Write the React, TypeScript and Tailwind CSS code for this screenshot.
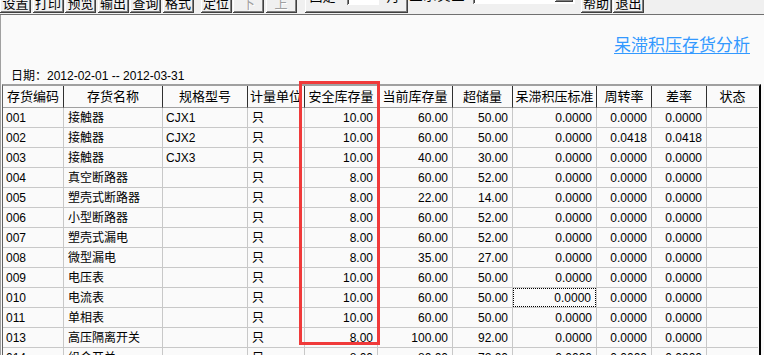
const FONT = "font-['Liberation_Sans','Noto_Sans_CJK_SC',sans-serif]";

const raised =
  "shadow-[inset_-1px_-1px_#404040,inset_1px_1px_#ffffff,inset_-2px_-2px_#808080]";
const sunken =
  "shadow-[inset_1px_1px_#808080,inset_-1px_-1px_#ffffff,inset_2px_2px_#404040]";

const headers = [
  "存货编码",
  "存货名称",
  "规格型号",
  "计量单位",
  "安全库存量",
  "当前库存量",
  "超储量",
  "呆滞积压标准",
  "周转率",
  "差率",
  "状态",
];

type Row = [string, string, string, string, string, string, string, string, string, string];

const rows: Row[] = [
  ["001", "接触器", "CJX1", "只", "10.00", "60.00", "50.00", "0.0000", "0.0000", "0.0000"],
  ["002", "接触器", "CJX2", "只", "10.00", "60.00", "50.00", "0.0000", "0.0418", "0.0418"],
  ["003", "接触器", "CJX3", "只", "10.00", "40.00", "30.00", "0.0000", "0.0000", "0.0000"],
  ["004", "真空断路器", "", "只", "8.00", "60.00", "52.00", "0.0000", "0.0000", "0.0000"],
  ["005", "塑壳式断路器", "", "只", "8.00", "22.00", "14.00", "0.0000", "0.0000", "0.0000"],
  ["006", "小型断路器", "", "只", "8.00", "60.00", "52.00", "0.0000", "0.0000", "0.0000"],
  ["007", "塑壳式漏电", "", "只", "8.00", "60.00", "52.00", "0.0000", "0.0000", "0.0000"],
  ["008", "微型漏电", "", "只", "8.00", "35.00", "27.00", "0.0000", "0.0000", "0.0000"],
  ["009", "电压表", "", "只", "10.00", "60.00", "50.00", "0.0000", "0.0000", "0.0000"],
  ["010", "电流表", "", "只", "10.00", "60.00", "50.00", "0.0000", "0.0000", "0.0000"],
  ["011", "单相表", "", "只", "10.00", "60.00", "50.00", "0.0000", "0.0000", "0.0000"],
  ["013", "高压隔离开关", "", "只", "8.00", "100.00", "92.00", "0.0000", "0.0000", "0.0000"],
  ["014", "组合开关", "", "只", "8.00", "80.00", "72.00", "0.0000", "0.0000", "0.0000"],
];

function ToolButton({ label, disabled }: { label: string; disabled?: boolean }) {
  return (
    <div
      className={`flex h-[20px] w-[31px] shrink-0 items-center justify-center bg-[#f0f0f0] text-[13px] leading-none ${raised} ${
        disabled ? "text-[#a0a0a0] [text-shadow:1px_1px_#ffffff]" : "text-black"
      }`}
    >
      {label}
    </div>
  );
}

function Toolbar() {
  return (
    <div className="flex h-[15px] items-end overflow-hidden border-b border-[#707070] bg-[#f0f0f0] pb-px">
      <div className="flex items-end gap-[1.5px]">
        <ToolButton label="设置" />
        <ToolButton label="打印" />
        <ToolButton label="预览" />
        <ToolButton label="输出" />
        <ToolButton label="查询" />
        <ToolButton label="格式" />
      </div>
      <div className="ml-[7px] flex items-end gap-[1.5px]">
        <ToolButton label="定位" />
        <ToolButton label="下" disabled />
        <ToolButton label="上" disabled />
      </div>

      {/* month group */}
      <div className={`ml-[8px] flex h-[34px] w-[103px] shrink-0 items-end pb-[8px] pl-[5px] ${raised}`}>
        <span className="text-[13px] leading-[16px]">固定</span>
        <div className={`ml-[11px] h-[20px] w-[32px] bg-white ${sunken}`} />
        <span className="ml-[8px] text-[13px] leading-[16px]">月</span>
      </div>

      <div className="flex h-[34px] shrink-0 items-end pb-[9px]">
        <span className="ml-[2px] text-[13px] leading-[16px] tracking-[1px]">显示类型</span>
        <div className={`ml-[7px] flex h-[20px] w-[102px] items-center bg-white pl-[4px] ${sunken}`}>
          <span className="flex-1 text-[12px] leading-[16px]">全部存货类型</span>
          <div className={`mr-[2px] h-[16px] w-[18px] bg-[#f0f0f0] ${raised}`} />
        </div>
      </div>

      <div className="ml-[6px] flex items-end gap-[1.5px]">
        <ToolButton label="帮助" />
        <ToolButton label="退出" />
      </div>
    </div>
  );
}

const gridCols =
  "grid grid-cols-[61px_99px_85px_57px_73px_75px_60px_84px_55px_55px_51px]";

function Cell({ value, col, focused }: { value: string; col: number; focused?: boolean }) {
  const right = col >= 4 && col <= 9;
  const pad =
    col === 0
      ? "pl-[3px]"
      : col === 1
        ? "pl-[4px]"
        : col === 2
          ? "pl-[3px]"
          : col === 3
            ? "pl-[4px]"
            : right
              ? "pr-[4px]"
              : "";
  const border = col === 10 ? "border-b border-[#c8c8c8]" : "border-r border-b border-[#c8c8c8]";
  return (
    <div className={`h-[20px] overflow-hidden ${border}`}>
      <div
        className={`flex h-full items-center whitespace-nowrap text-[12px] leading-none ${
          right ? "justify-end" : "justify-start"
        } ${pad} ${focused ? "border border-dotted border-black" : ""}`}
      >
        {value}
      </div>
    </div>
  );
}

export default function App() {
  return (
    <div className={`h-[355px] w-[764px] overflow-hidden bg-[#f0f0f0] text-black ${FONT}`}>
      <Toolbar />

      <div className="relative h-[340px] overflow-hidden border-l border-[#a0a0a0] bg-[#fafafa]">
        <div className="mt-[21px] flex h-[20px] justify-end pr-[14px]">
          <span className="text-[17px] leading-[20px] text-[#3399ff] underline underline-offset-[2px]">
            呆滞积压存货分析
          </span>
        </div>

        <div className="mt-[13px] h-[14px] pl-[10px] text-[12px] leading-[14px]">
          日期：2012-02-01 -- 2012-03-31
        </div>

        <div className="ml-[1px] mt-px w-[759px] border-t-2 border-t-[#a0a0a0] border-l border-l-[#606060] border-r-2 border-r-black">
          <div className={gridCols}>
            {headers.map((h, i) => (
              <div
                key={h}
                className={`flex h-[22px] items-center justify-center border-b border-b-[#a0a0a0] text-[13px] leading-none whitespace-nowrap ${
                  i === 10 ? "" : "border-r border-r-[#303030]"
                }`}
              >
                {h}
              </div>
            ))}
          </div>
          {rows.map((r, ri) => (
            <div key={r[0]} className={gridCols}>
              {[...r, ""].map((v, ci) => (
                <Cell key={ci} value={v} col={ci} focused={ri === 9 && ci === 7} />
              ))}
            </div>
          ))}
        </div>

        {/* highlight box drawn over the grid */}
        <div className="pointer-events-none absolute left-[298px] top-[66px] h-[264px] w-[81px] border-[3px] border-[#f03a3a]" />
      </div>
    </div>
  );
}
